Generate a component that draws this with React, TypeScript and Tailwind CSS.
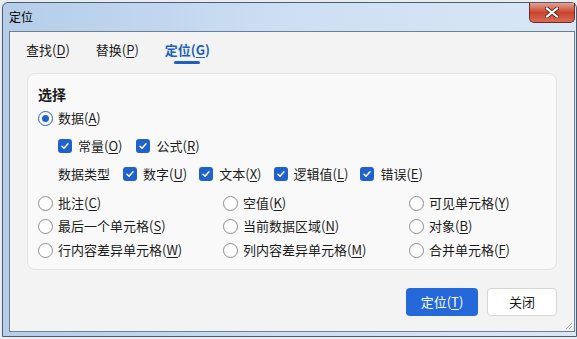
import React from 'react'

const font = { fontFamily: '"Noto Sans CJK SC", "Noto Sans", sans-serif' }

function Radio({ checked }: { checked?: boolean }) {
  return checked ? (
    <span className="w-[15px] h-[15px] rounded-full border-[1.5px] border-[#1f62cc] bg-white flex items-center justify-center shrink-0">
      <span className="w-[7px] h-[7px] rounded-full bg-[#1f62cc]" />
    </span>
  ) : (
    <span className="w-[15px] h-[15px] rounded-full border border-[#8c8c8c] bg-white shrink-0" />
  )
}

function Check() {
  return (
    <span className="w-[14px] h-[14px] rounded-[3px] bg-[#1f62cc] flex items-center justify-center shrink-0">
      <svg width="10" height="10" viewBox="0 0 10 10" fill="none">
        <path d="M2 5.2l2 2 4-4.4" stroke="white" strokeWidth="1.5" strokeLinecap="round" strokeLinejoin="round" />
      </svg>
    </span>
  )
}

// label like 数据(A) with the key letter underlined
function Label({ text, k }: { text: string; k: string }) {
  return (
    <span className="whitespace-nowrap">
      {text}(<u className="underline-offset-2">{k}</u>)
    </span>
  )
}

function RadioItem({ text, k, checked }: { text: string; k: string; checked?: boolean }) {
  return (
    <div className="flex items-center gap-[5px] h-[20px]">
      <Radio checked={checked} />
      <Label text={text} k={k} />
    </div>
  )
}

function CheckItem({ text, k }: { text: string; k: string }) {
  return (
    <div className="flex items-center gap-[6px] h-[20px]">
      <Check />
      <Label text={text} k={k} />
    </div>
  )
}

export default function App() {
  return (
    <div className="w-[577px] h-[339px] bg-[#e9ecef] overflow-hidden pl-[2px] pt-[2px] text-[13px] text-[#1b1b1b]" style={font}>
      {/* window frame */}
      <div className="w-[575px] h-[335px] rounded-t-[6px] border border-[#4e5e72] bg-gradient-to-r from-[#b4cde9] via-[#cddff3] to-[#d9e7f6] flex flex-col">
        {/* title bar */}
        <div className="relative h-[28px] flex items-center pl-[6px]">
          <span className="text-[12px] text-black">定位</span>
          <div className="absolute top-0 right-[1px] w-[46px] h-[20px] rounded-b-[5px] border border-[#6e2a22] border-t-0 bg-gradient-to-b from-[#e3a08f] via-[#c9432d] to-[#d96a55] flex items-center justify-center">
            <svg width="14" height="11" viewBox="0 0 14 11">
              <path d="M2 1.5l10 8M12 1.5l-10 8" stroke="#4a1a14" strokeWidth="3.6" strokeLinecap="square" />
              <path d="M2 1.5l10 8M12 1.5l-10 8" stroke="white" strokeWidth="2.2" strokeLinecap="square" />
            </svg>
          </div>
        </div>

        {/* client area */}
        <div className="ml-[6px] mr-[1px] h-[301px] border border-[#6f7e91] bg-[#f3f3f3] flex flex-col">
          {/* tabs */}
          <div className="h-[36px] flex items-center pl-[16px] gap-[26px]">
            <Label text="查找" k="D" />
            <Label text="替换" k="P" />
            <div className="relative flex items-center">
              <span className="font-semibold text-[#1f5fbf]">
                定位(<u className="underline-offset-2">G</u>)
              </span>
              <span className="absolute left-1/2 -translate-x-1/2 top-[21px] w-[26px] h-[3px] rounded-full bg-[#1f5fbf]" />
            </div>
          </div>

          {/* group panel */}
          <div className="mt-[5px] ml-[17px] w-[530px] h-[197px] rounded-[8px] border border-[#e3e3e3] bg-[#f9f9f9] pt-[10px] pl-[10px] flex flex-col">
            <div className="h-[20px] flex items-center font-bold text-[14px]">选择</div>
            <div className="mt-[4px]">
              <RadioItem text="数据" k="A" checked />
            </div>
            <div className="mt-[8px] pl-[20px] flex items-center gap-[14px]">
              <CheckItem text="常量" k="O" />
              <CheckItem text="公式" k="R" />
            </div>
            <div className="mt-[8px] pl-[20px] flex items-center gap-[12px] h-[20px]">
              <span className="mr-[1px]">数据类型</span>
              <CheckItem text="数字" k="U" />
              <CheckItem text="文本" k="X" />
              <CheckItem text="逻辑值" k="L" />
              <CheckItem text="错误" k="E" />
            </div>
            <div className="mt-[9px] grid grid-cols-[185px_186px_1fr] gap-y-[3px]">
              <RadioItem text="批注" k="C" />
              <RadioItem text="空值" k="K" />
              <RadioItem text="可见单元格" k="Y" />
              <RadioItem text="最后一个单元格" k="S" />
              <RadioItem text="当前数据区域" k="N" />
              <RadioItem text="对象" k="B" />
              <div className="mt-[1px]"><RadioItem text="行内容差异单元格" k="W" /></div>
              <div className="mt-[1px]"><RadioItem text="列内容差异单元格" k="M" /></div>
              <div className="mt-[1px]"><RadioItem text="合并单元格" k="F" /></div>
            </div>
          </div>

          {/* buttons */}
          <div className="relative mt-[18px] mr-[17px] flex justify-end gap-[9px] flex-1">
            <button className="w-[72px] h-[28px] rounded-[4px] bg-[#2468d9] text-white">
              定位(<u className="underline-offset-2">T</u>)
            </button>
            <button className="w-[70px] h-[28px] rounded-[4px] border border-[#d6d6d6] bg-white text-[#1b1b1b]">
              关闭
            </button>
            <svg className="absolute right-[-16px] bottom-[1px]" width="9" height="9" viewBox="0 0 9 9">
              <path d="M8 2L2 8M8 5L5 8" stroke="#9a9a9a" strokeWidth="1" />
            </svg>
          </div>
        </div>
      </div>
    </div>
  )
}
